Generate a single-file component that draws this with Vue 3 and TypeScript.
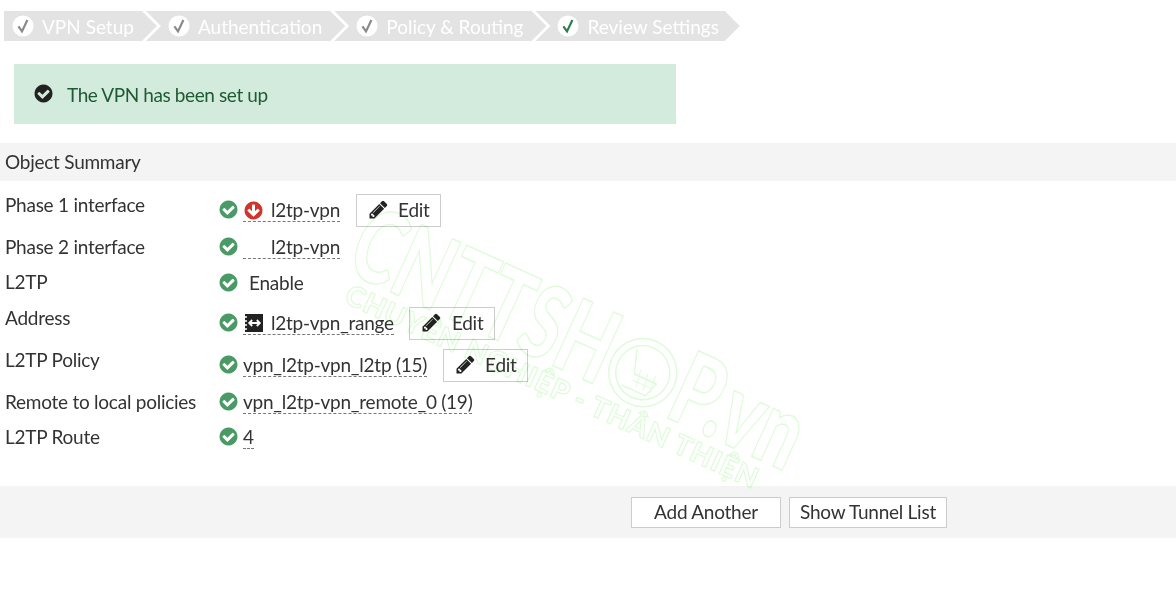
<template>
  <div class="wizard">
    <div class="steps">
      <div v-for="(step, i) in steps" :key="step" class="step" :class="{ first: i === 0, last: i === steps.length - 1 }">
        <svg class="step-icon" viewBox="0 0 22 22">
          <circle cx="11" cy="11" r="10.5" fill="#fff" />
          <path d="M6.4 11.4 10 16.4 15.4 5" fill="none" :stroke="i === steps.length - 1 ? '#2f7d50' : '#8a8a8a'" stroke-width="2.2" />
        </svg>
        <span>{{ step }}</span>
      </div>
    </div>

    <div class="alert">
      <svg class="icon" viewBox="0 0 1792 1792"><path :d="checkCircle" fill="#222" /></svg>
      <span>The VPN has been set up</span>
    </div>

    <div class="section-title">Object Summary</div>

    <div class="rows">
      <div v-for="row in rows" :key="row.label" class="row" :class="{ 'has-edit': row.edit }">
        <div class="label">{{ row.label }}</div>
        <div class="value">
          <svg class="icon status" viewBox="0 0 1792 1792"><path :d="checkCircle" fill="#4a9a66" /></svg>
          <span v-if="row.plain" class="plain">{{ row.text }}</span>
          <span v-else class="link">
            <svg v-if="row.icon === 'down'" class="icon" viewBox="0 0 1792 1792"><path :d="arrowDown" fill="#d0342c" /></svg>
            <span v-else-if="row.icon === 'blank'" class="blank"></span>
            <svg v-else-if="row.icon === 'range'" class="range" viewBox="0 0 18 18">
              <rect width="18" height="18" fill="#222" />
              <path d="M0 3h2M0 7h2M0 11h2M0 15h2" stroke="#fff" stroke-width="1.5" />
              <path d="M4.5 9h10M7.2 6 4.2 9l3 3M11.8 6l3 3-3 3" fill="none" stroke="#fff" stroke-width="1.8" />
            </svg>
            <span :class="{ 'after-icon': row.icon }">{{ row.text }}</span>
          </span>
          <button v-if="row.edit" class="edit-btn" type="button">
            <svg class="icon" viewBox="0 0 1792 1792"><path :d="pencil" fill="#222" /></svg>
            <span>Edit</span>
          </button>
        </div>
      </div>
    </div>

    <div class="footer">
      <button class="btn add" type="button">Add Another</button>
      <button class="btn show" type="button">Show Tunnel List</button>
    </div>

    <svg class="watermark" viewBox="0 0 1176 606" width="1176" height="606">
      <g transform="translate(350 270) rotate(24.5)">
        <text class="wm-big" x="-6" y="3" textLength="279" lengthAdjust="spacingAndGlyphs">CNTTSH</text>
        <text class="wm-big" x="345" y="3" textLength="135" lengthAdjust="spacingAndGlyphs">P.vn</text>
        <circle cx="309" cy="-28" r="34" class="wm-line" />
        <circle cx="309" cy="-28" r="27" class="wm-line" />
        <path d="M294 -47l8 24h24l-5 15h-26M298 -2h1M318 -2h1" class="wm-line" />
        <path d="M306 -30l3 18M314 -30l3 18M322 -30l2 18M302 -24h24M303 -17h21" class="wm-line thin" />
        <text class="wm-small" x="7" y="32" textLength="450" lengthAdjust="spacing">CHUYÊN NGHIỆP - THÂN THIỆN</text>
      </g>
    </svg>
  </div>
</template>

<script setup lang="ts">
interface SummaryRow {
  label: string
  text: string
  icon?: 'down' | 'blank' | 'range'
  edit?: boolean
  plain?: boolean
}

const checkCircle =
  'M1412 734q0-28-18-46l-91-90q-19-19-45-19t-45 19l-408 407-226-226q-19-19-45-19t-45 19l-91 90q-18 18-18 46 0 27 18 45l362 362q19 19 45 19 27 0 46-19l543-543q18-18 18-45zm252 162q0 209-103 385.5t-279.5 279.5-385.5 103-385.5-103-279.5-279.5-103-385.5 103-385.5 279.5-279.5 385.5-103 385.5 103 279.5 279.5 103 385.5z'
const arrowDown =
  'M1412 897q0-27-18-45l-91-91q-18-18-45-18t-45 18l-189 189v-502q0-26-19-45t-45-19h-128q-26 0-45 19t-19 45v502l-189-189q-19-19-45-19t-45 19l-91 91q-18 18-18 45t18 45l362 362 91 91q18 18 45 18t45-18l91-91 362-362q18-18 18-45zm252-1q0 209-103 385.5t-279.5 279.5-385.5 103-385.5-103-279.5-279.5-103-385.5 103-385.5 279.5-279.5 385.5-103 385.5 103 279.5 279.5 103 385.5z'
const pencil =
  'M491 1536l91-91-235-235-91 91v107h128v128h107zm523-928q0-22-22-22-10 0-17 7l-542 542q-7 7-7 17 0 22 22 22 10 0 17-7l542-542q7-7 7-17zm-54-192l416 416-832 832h-416v-416zm683 96q0 53-37 90l-166 166-416-416 166-165q36-38 90-38 53 0 91 38l235 234q37 39 37 91z'

const steps = ['VPN Setup', 'Authentication', 'Policy & Routing', 'Review Settings']

const rows: SummaryRow[] = [
  { label: 'Phase 1 interface', text: 'l2tp-vpn', icon: 'down', edit: true },
  { label: 'Phase 2 interface', text: 'l2tp-vpn', icon: 'blank' },
  { label: 'L2TP', text: 'Enable', plain: true },
  { label: 'Address', text: 'l2tp-vpn_range', icon: 'range', edit: true },
  { label: 'L2TP Policy', text: 'vpn_l2tp-vpn_l2tp (15)', edit: true },
  { label: 'Remote to local policies', text: 'vpn_l2tp-vpn_remote_0 (19)' },
  { label: 'L2TP Route', text: '4' }
]
</script>

<style scoped>
.wizard {
  position: relative;
  width: 1176px;
  height: 606px;
  overflow: hidden;
  background: #fff;
  color: #333;
  font-family: Lato, "Open Sans", sans-serif;
  font-size: 19px;
  letter-spacing: -0.25px;
}
.steps {
  display: flex;
  padding: 11px 0 0 4px;
  letter-spacing: 0;
}
.step {
  display: flex;
  align-items: center;
  height: 30px;
  margin-right: -11px;
  padding: 0 23px 0 22px;
  background: #e3e3e3;
  color: #fff;
  clip-path: polygon(0 0, calc(100% - 15px) 0, 100% 50%, calc(100% - 15px) 100%, 0 100%, 15px 50%);
}
.step.first {
  padding-left: 8px;
  clip-path: polygon(0 0, calc(100% - 15px) 0, 100% 50%, calc(100% - 15px) 100%, 0 100%);
}
.step.last {
  padding-right: 21px;
}
.step-icon {
  width: 22px;
  height: 22px;
  margin-right: 8px;
}
.alert {
  display: flex;
  align-items: center;
  width: 662px;
  height: 60px;
  box-sizing: border-box;
  margin: 23px 0 19px 14px;
  padding-left: 19px;
  background: #d3ebdc;
  color: #1f5a34;
  letter-spacing: -0.4px;
}
.alert .icon {
  margin: -2px 13px 0 0;
}
.icon {
  flex: none;
  width: 21px;
  height: 21px;
}
.section-title {
  height: 38px;
  padding-left: 5px;
  background: #f4f4f4;
  line-height: 38px;
}
.rows {
  margin-top: 13px;
}
.row {
  display: grid;
  grid-template-columns: 213px 1fr;
  margin-bottom: 12px;
  padding-left: 5px;
}
.row.has-edit {
  margin-bottom: 9px;
}
.label {
  line-height: 22px;
}
.value {
  display: flex;
  align-items: center;
  line-height: 22px;
}
.status {
  margin: -2px 4px 0 0;
}
.plain {
  padding: 1px 0;
  margin-left: 6px;
}
.link {
  display: inline-flex;
  align-items: center;
  border-bottom: 1px dashed #777;
}
.blank {
  width: 21px;
  height: 21px;
}
.range {
  width: 18px;
  height: 18px;
  margin: 0 1.5px;
}
.after-icon {
  margin-left: 7px;
}
.edit-btn {
  display: flex;
  align-items: center;
  height: 33px;
  box-sizing: border-box;
  margin-left: 15.5px;
  padding: 0 10.5px 2px 11px;
  border: 1px solid #ccc;
  background: transparent;
  color: #333;
  font: inherit;
  letter-spacing: inherit;
}
.edit-btn span {
  margin-left: 9.5px;
}
.footer {
  position: absolute;
  left: 0;
  right: 0;
  top: 486px;
  display: flex;
  gap: 8px;
  height: 52px;
  box-sizing: border-box;
  padding: 11px 0 0 631px;
  background: #f4f4f4;
}
.btn {
  height: 31px;
  box-sizing: border-box;
  padding: 0 0 2px;
  border: 1px solid #ccc;
  background: #fff;
  color: #333;
  font: inherit;
  letter-spacing: inherit;
}
.btn.add {
  width: 150px;
}
.btn.show {
  width: 158px;
}
.watermark {
  position: absolute;
  left: 0;
  top: 0;
  pointer-events: none;
  letter-spacing: 0;
  mix-blend-mode: multiply;
}
.wm-big,
.wm-small,
.wm-line {
  fill: none;
  stroke: #dffbda;
  stroke-width: 1.5;
}
.wm-big,
.wm-small {
  font-family: Lato, sans-serif;
  font-weight: 900;
}
.wm-big {
  font-size: 102px;
}
.wm-small {
  font-size: 28px;
  stroke-width: 1.2;
}
.thin {
  stroke-width: 1;
}
</style>
